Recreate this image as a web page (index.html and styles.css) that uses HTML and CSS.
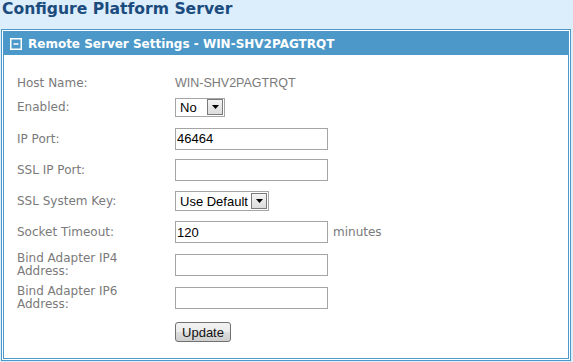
FILE: index.html
```html
<!DOCTYPE html>
<html lang="en">
<head>
    <meta charset="UTF-8">
    <meta name="viewport" content="width=device-width, initial-scale=1.0">
    <title>Configure Platform Server</title>
    <link rel="stylesheet" href="styles.css">
</head>
<body>
    <h1 class="page-title">Configure Platform Server</h1>

    <div class="panel">
        <div class="panel-inner">
            <div class="panel-head">
                <svg class="toggle" width="12" height="12" viewBox="0 0 12 12">
                    <rect x="0.75" y="0.75" width="10.5" height="10.5" fill="none" stroke="#fff" stroke-width="1.5"/>
                    <line x1="3.5" y1="6" x2="8.5" y2="6" stroke="#fff" stroke-width="1.5"/>
                </svg>
                <span>Remote Server Settings - WIN-SHV2PAGTRQT</span>
            </div>

            <form class="settings">
                <div class="row row-first">
                    <label class="label">Host Name:</label>
                    <span class="plain">WIN-SHV2PAGTRQT</span>
                </div>
                <div class="row">
                    <label class="label">Enabled:</label>
                    <span class="select select-small">
                        <select><option>No</option><option>Yes</option></select>
                        <span class="arrow"><svg width="7" height="4" viewBox="0 0 7 4"><path d="M0 0h7L3.5 4z" fill="#000"/></svg></span>
                    </span>
                </div>
                <div class="row row-short">
                    <label class="label">IP Port:</label>
                    <input class="field" type="text" value="46464">
                </div>
                <div class="row">
                    <label class="label">SSL IP Port:</label>
                    <input class="field" type="text" value="">
                </div>
                <div class="row row-key">
                    <label class="label">SSL System Key:</label>
                    <span class="select select-wide">
                        <select><option>Use Default</option></select>
                        <span class="arrow"><svg width="7" height="4" viewBox="0 0 7 4"><path d="M0 0h7L3.5 4z" fill="#000"/></svg></span>
                    </span>
                </div>
                <div class="row">
                    <label class="label">Socket Timeout:</label>
                    <input class="field" type="text" value="120">
                    <span class="unit">minutes</span>
                </div>
                <div class="row row-addr">
                    <label class="label label-wrap">Bind Adapter IP4<br>Address:</label>
                    <input class="field" type="text" value="">
                </div>
                <div class="row row-addr">
                    <label class="label label-wrap">Bind Adapter IP6<br>Address:</label>
                    <input class="field" type="text" value="">
                </div>
                <div class="row row-submit">
                    <span class="label"></span>
                    <button class="btn" type="button">Update</button>
                </div>
            </form>
        </div>
    </div>
</body>
</html>
```

FILE: styles.css
```css
body {
    margin: 0;
    background-color: #dcedfc;
    font-family: "DejaVu Sans", Verdana, sans-serif;
}
.page-title {
    margin: 0;
    padding-left: 2px;
    height: 29px;
    font-size: 15.6px;
    line-height: 19px;
    color: #1b4c7d;
}
.panel {
    margin-left: 1px;
    width: 570px;
    height: 332px;
    box-sizing: border-box;
    border: 1px solid #4b98c9;
    padding: 1px;
    background-color: #fff;
}
.panel-inner {
    height: 100%;
    box-sizing: border-box;
    border: 1px solid #4b98c9;
}
.panel-head {
    display: flex;
    align-items: center;
    gap: 6px;
    height: 23px;
    padding-left: 6px;
    background-color: #4b98c9;
    color: #fff;
    font-size: 12px;
    font-weight: bold;
}
.settings {
    padding: 19px 0 0 13px;
}
.row {
    display: flex;
    align-items: center;
    min-height: 32px;
}
.row-first {
    min-height: 17px;
}
.row-short {
    min-height: 31px;
}
.row-key {
    min-height: 30px;
}
.row-addr {
    min-height: 33px;
}
.row-submit {
    min-height: 36px;
}
.label {
    flex: none;
    width: 158px;
    font-size: 12px;
    line-height: 12px;
    color: #7a7a7a;
}
.label-wrap {
    line-height: 13px;
}
.plain {
    font-family: "Liberation Sans", Arial, sans-serif;
    font-size: 12.5px;
    color: #7a7a7a;
}
.field {
    width: 153px;
    height: 22px;
    box-sizing: border-box;
    margin: 0;
    padding: 0 1px;
    border: 1px solid #a5a5a5;
    font-family: "Liberation Sans", Arial, sans-serif;
    font-size: 13px;
    color: #000;
    outline: none;
}
.unit {
    margin-left: 5px;
    font-size: 12px;
    color: #7a7a7a;
}
.select {
    position: relative;
    display: inline-block;
}
.select select {
    appearance: none;
    -webkit-appearance: none;
    height: 19px;
    box-sizing: border-box;
    margin: 0;
    padding: 0 0 0 4px;
    border: 1px solid #a5a5a5;
    border-radius: 0;
    background-color: #fff;
    font-family: "Liberation Sans", Arial, sans-serif;
    font-size: 13px;
    color: #000;
    outline: none;
}
.select-small select {
    width: 50px;
}
.select-wide select {
    width: 94px;
    height: 20px;
}
.arrow {
    position: absolute;
    top: 2px;
    right: 2px;
    bottom: 2px;
    width: 16px;
    box-sizing: border-box;
    display: flex;
    align-items: center;
    justify-content: center;
    border: 1px solid #7a7a7a;
    background: linear-gradient(#f4f4f4, #dcdcdc);
    pointer-events: none;
}
.btn {
    width: 56px;
    height: 20px;
    margin: 0;
    padding: 0;
    border: 1px solid #707070;
    border-radius: 3px;
    background: linear-gradient(#f2f2f2, #ebebeb 50%, #dddddd 50%, #cfcfcf);
    font-family: "Liberation Sans", Arial, sans-serif;
    font-size: 13px;
    color: #111;
}
```
